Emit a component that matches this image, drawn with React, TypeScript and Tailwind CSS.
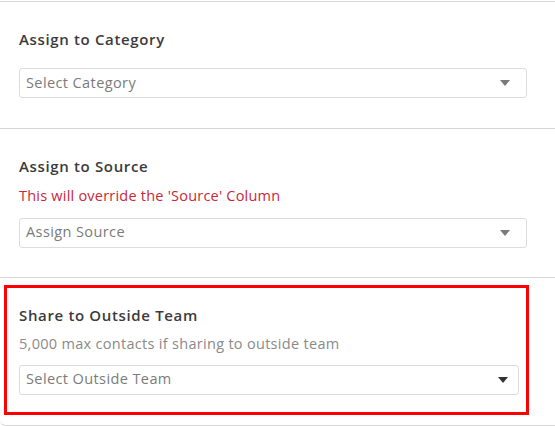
import { ReactNode } from 'react';

interface PickerProps {
  placeholder: string;
  caretClass?: string;
  className?: string;
}

// Simple closed dropdown look, caret on the right
function Picker({ placeholder, caretClass = 'text-[#7a7a7a] mr-[16px]', className = '' }: PickerProps) {
  return (
    <div
      className={`h-[30px] flex items-center justify-between border border-[#dcdcdc] rounded-[3px] bg-white pl-[6px] ${className}`}
    >
      <span className="text-[14.5px] tracking-[0.4px] text-[#7b7b7b] leading-none">{placeholder}</span>
      <svg width="10" height="6" viewBox="0 0 10 6" className={caretClass}>
        <path d="M0 0h10L5 6z" fill="currentColor" />
      </svg>
    </div>
  );
}

function Heading({ children }: { children: ReactNode }) {
  return (
    <h3 className="text-[15px] font-semibold tracking-[0.65px] text-[#3b3b3b] leading-none">{children}</h3>
  );
}

export default function App() {
  return (
    <div className="w-[555px] h-[426px] bg-white overflow-hidden font-['Open_Sans',sans-serif]">
      <div className="mt-[1px] border-t border-[#d6d6d6] h-[127px] pl-[19px] pr-[28px] pt-[30px]">
        <Heading>Assign to Category</Heading>
        <Picker placeholder="Select Category" className="mt-[21px]" />
      </div>

      <div className="border-t border-[#d6d6d6] h-[149px] pl-[19px] pr-[28px] pt-[30px]">
        <Heading>Assign to Source</Heading>
        <p className="mt-[15px] text-[14.5px] tracking-[0.22px] text-[#c8283a] leading-none">
          This will override the 'Source' Column
        </p>
        <Picker placeholder="Assign Source" className="mt-[14px]" />
      </div>

      <div className="border-t border-b border-[#d6d6d6] rounded-bl-[6px] h-[149px] pt-[7px] pl-[4px] pr-[26px]">
        <div className="border-[3px] border-[#ff0000] h-[130px] pl-[12px] pr-[7px] pt-[20px]">
          <Heading>Share to Outside Team</Heading>
          <p className="mt-[14px] text-[14.5px] tracking-[0.3px] text-[#8a8a8a] leading-none">
            5,000 max contacts if sharing to outside team
          </p>
          <Picker
            placeholder="Select Outside Team"
            caretClass="text-[#333333] mr-[10px]"
            className="mt-[13px] rounded-[2px]"
          />
        </div>
      </div>
    </div>
  );
}
